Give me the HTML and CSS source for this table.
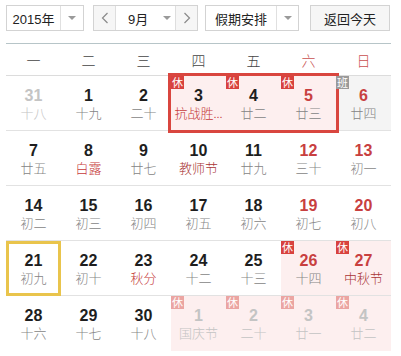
FILE: index.html
```html
<!DOCTYPE html>
<html lang="zh-CN">
<head>
<meta charset="utf-8">
<link rel="stylesheet" href="styles.css">
</head>
<body>
<div class="toolbar">
  <div class="box year">
    <span class="val">2015年</span>
    <span class="dd"><i class="tri"></i></span>
  </div>
  <div class="box month">
    <span class="nav"><svg width="8" height="12" viewBox="0 0 8 12"><path d="M6.5 1 L1.5 6 L6.5 11" fill="none" stroke="#8a8a8a" stroke-width="1.2"/></svg></span>
    <span class="mval">9月</span>
    <span class="mdd"><i class="tri"></i></span>
    <span class="nav next"><svg width="8" height="12" viewBox="0 0 8 12"><path d="M1.5 1 L6.5 6 L1.5 11" fill="none" stroke="#8a8a8a" stroke-width="1.2"/></svg></span>
  </div>
  <div class="box hol">
    <span class="val">假期安排</span>
    <span class="dd"><i class="tri"></i></span>
  </div>
  <div class="box today-btn">返回今天</div>
</div>

<div class="cal">
  <div class="week">
    <span>一</span><span>二</span><span>三</span><span>四</span><span>五</span><span class="we">六</span><span class="we">日</span>
  </div>
  <div class="days">
    <div class="d other"><b>31</b><em>十八</em></div>
    <div class="d"><b>1</b><em>十九</em></div>
    <div class="d"><b>2</b><em>二十</em></div>
    <div class="d rest"><span class="frame"></span><i class="badge">休</i><b>3</b><em class="fest">抗战胜<span class="ell">...</span></em></div>
    <div class="d rest"><i class="badge">休</i><b>4</b><em>廿二</em></div>
    <div class="d rest red"><i class="badge">休</i><b>5</b><em>廿三</em></div>
    <div class="d work red"><i class="badge gray">班</i><b>6</b><em>廿四</em></div>

    <div class="d"><b>7</b><em>廿五</em></div>
    <div class="d"><b>8</b><em class="fest">白露</em></div>
    <div class="d"><b>9</b><em>廿七</em></div>
    <div class="d"><b>10</b><em class="fest dark">教师节</em></div>
    <div class="d"><b>11</b><em>廿九</em></div>
    <div class="d red"><b>12</b><em>三十</em></div>
    <div class="d red"><b>13</b><em>初一</em></div>

    <div class="d"><b>14</b><em>初二</em></div>
    <div class="d"><b>15</b><em>初三</em></div>
    <div class="d"><b>16</b><em>初四</em></div>
    <div class="d"><b>17</b><em>初五</em></div>
    <div class="d"><b>18</b><em>初六</em></div>
    <div class="d red"><b>19</b><em>初七</em></div>
    <div class="d red"><b>20</b><em>初八</em></div>

    <div class="d today"><b>21</b><em>初九</em></div>
    <div class="d"><b>22</b><em>初十</em></div>
    <div class="d"><b>23</b><em class="fest">秋分</em></div>
    <div class="d"><b>24</b><em>十二</em></div>
    <div class="d"><b>25</b><em>十三</em></div>
    <div class="d rest red"><i class="badge">休</i><b>26</b><em>十四</em></div>
    <div class="d rest red"><i class="badge">休</i><b>27</b><em class="fest dark">中秋节</em></div>

    <div class="d"><b>28</b><em>十六</em></div>
    <div class="d"><b>29</b><em>十七</em></div>
    <div class="d"><b>30</b><em>十八</em></div>
    <div class="d rest other"><i class="badge faded">休</i><b>1</b><em>国庆节</em></div>
    <div class="d rest other"><i class="badge faded">休</i><b>2</b><em>二十</em></div>
    <div class="d rest other"><i class="badge faded">休</i><b>3</b><em>廿一</em></div>
    <div class="d rest other"><i class="badge faded">休</i><b>4</b><em>廿二</em></div>
  </div>
</div>
</body>
</html>
```

FILE: styles.css
```css
html, body {
  margin: 0;
  background: #fff;
}
body {
  font-family: "Liberation Sans", "Noto Sans CJK SC", sans-serif;
  color: #333;
}

/* ---------- toolbar ---------- */
.toolbar {
  display: flex;
  height: 26px;
  margin: 5px 0 0 6px;
  font-size: 13px;
  font-family: "Liberation Sans", "Noto Sans CJK SC", sans-serif;
}
.box {
  display: flex;
  align-items: stretch;
  box-sizing: border-box;
  height: 26px;
  border: 1px solid #d3d3d3;
  background: #fff;
}
.box .val {
  display: flex;
  align-items: center;
  justify-content: center;
  color: #222;
}
.box .dd {
  display: flex;
  align-items: center;
  justify-content: center;
  border-left: 1px solid #e0e0e0;
  background: #fff;
}
.tri {
  display: block;
  width: 0;
  height: 0;
  border-left: 4px solid transparent;
  border-right: 4px solid transparent;
  border-top: 4px solid #9a9a9a;
}
.year { width: 78px; }
.year .val { width: 53px; }
.year .dd { flex: 1; }

.month {
  width: 105px;
  margin-left: 9px;
}
.month .nav {
  width: 21px;
  display: flex;
  align-items: center;
  justify-content: center;
  background: #f6f6f6;
  border-right: 1px solid #dedede;
}
.month .nav.next {
  border-right: 0;
  border-left: 1px solid #dedede;
  flex: 1;
}
.month .mval {
  display: flex;
  align-items: center;
  padding-left: 12px;
  width: 30px;
  color: #222;
}
.month .mdd {
  display: flex;
  align-items: center;
  justify-content: center;
  width: 17px;
}

.hol {
  width: 94px;
  margin-left: 7px;
}
.hol .val { width: 70px; }
.hol .dd { flex: 1; }

.today-btn {
  width: 80px;
  margin-left: 11px;
  background: #f6f6f6;
  align-items: center;
  justify-content: center;
  color: #222;
}

/* ---------- calendar ---------- */
.cal {
  width: 385px;
  margin: 12px 0 0 6px;
}
.week {
  display: grid;
  grid-template-columns: repeat(7, 55px);
  height: 33px;
  box-sizing: border-box;
  border-top: 1px solid #b7c5c8;
  border-bottom: 1px solid #dcdcdc;
  align-items: center;
  justify-items: center;
  font-family: "Noto Sans CJK SC", sans-serif;
  font-weight: 300;
  font-size: 14px;
  color: #444;
}
.week .we { color: #c9504f; }

.days {
  display: grid;
  grid-template-columns: repeat(7, 55px);
  grid-auto-rows: 55px;
}
.d {
  position: relative;
  box-sizing: border-box;
  border-bottom: 1px solid #e2e2e2;
  display: flex;
  flex-direction: column;
  align-items: center;
  padding-top: 11px;
}
.days .d:nth-last-child(-n+7) { border-bottom: 0; }

.d b {
  display: block;
  font-family: "Liberation Sans", sans-serif;
  font-weight: bold;
  font-size: 16px;
  line-height: 18px;
  color: #1e1e1e;
}
.d em {
  display: block;
  font-style: normal;
  font-family: "Noto Sans CJK SC", sans-serif;
  font-weight: 300;
  font-size: 13px;
  line-height: 15px;
  color: #858585;
  white-space: nowrap;
}
.d em .ell {
  font-family: "Liberation Sans", sans-serif;
  font-size: 11px;
  letter-spacing: 0;
}
.d em.fest { color: #c63a3a; }
.d em.fest.dark { color: #a93535; }

.d.red b { color: #c8403f; }

.d.rest { background: #fdefef; }
.d.work { background: #f4f4f4; }

.d.other b { color: #c4c4c4; }
.d.other em { color: #c4c4c4; }

.d.today {
  outline: 3px solid #e9c44c;
  outline-offset: -3px;
}

.badge {
  position: absolute;
  left: 0;
  top: 0;
  z-index: 2;
  width: 13px;
  height: 13px;
  background: #d8423e;
  color: #fff;
  font-style: normal;
  font-family: "Noto Sans CJK SC", sans-serif;
  font-size: 11px;
  line-height: 13px;
  text-align: center;
}
.badge.gray { background: #9a9a9a; }
.badge.faded { background: #eba5a2; }

.frame {
  position: absolute;
  left: -3px;
  top: -3px;
  z-index: 1;
  width: 171px;
  height: 60px;
  box-sizing: border-box;
  border: 3px solid #d9463f;
  pointer-events: none;
}
```
